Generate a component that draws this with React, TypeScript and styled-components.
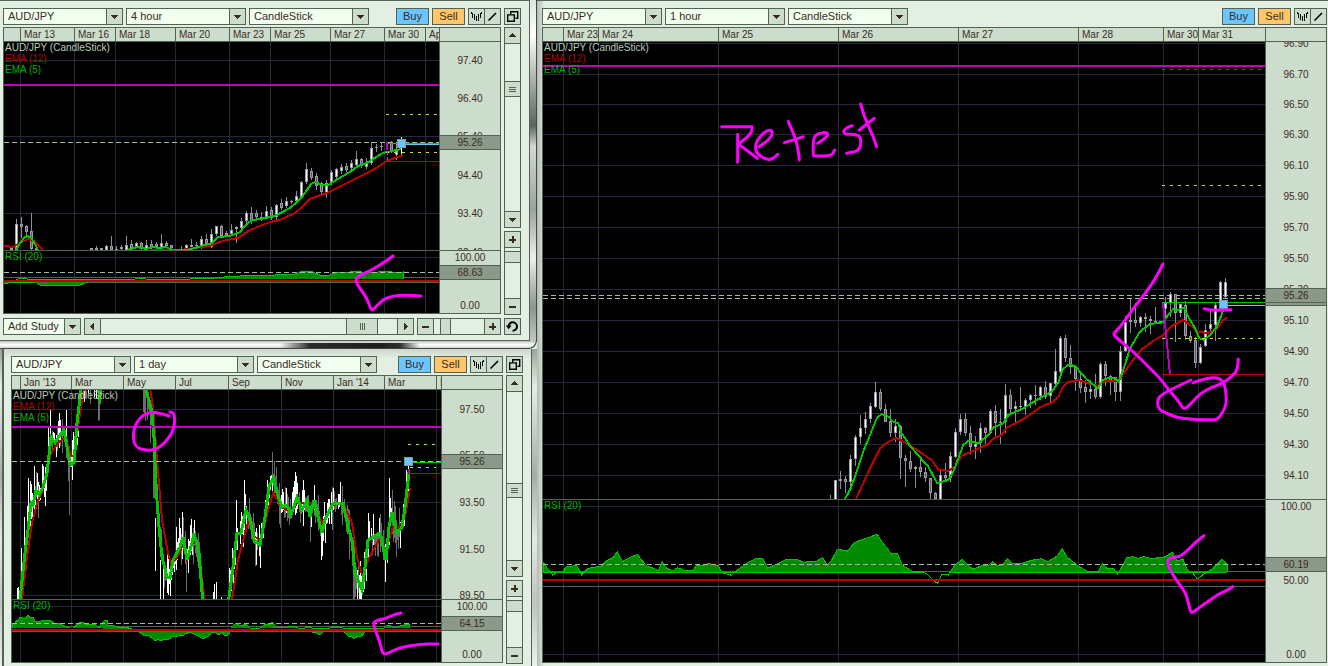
import React from 'react';
import styled, { createGlobalStyle } from 'styled-components';

/* ---------- theme ---------- */

const line = '#526352';
const face = '#cdddcd';
const panel = '#e4efe4';
const ink = '#3a2c1c';
const gridLine = '#222a3c';
const green = '#00c800';
const red = '#c00000';
const purple = '#c000c0';
const marker = '#ff00ff';
const pale = '#a9b9a9';
const yellow = '#dede21';
const blue = '#6bc6ff';

const GlobalStyle = createGlobalStyle`
  *, *::before, *::after { box-sizing: border-box; }
  body {
    margin: 0;
    background: ${panel};
    color: ${ink};
    font-family: "Liberation Sans", Arial, sans-serif;
    font-size: 11px;
    line-height: 15px;
  }
  button, select { font: inherit; color: inherit; }
`;

/* ---------- windows ---------- */

const Desktop = styled.main`
  display: grid;
  grid-template-columns: minmax(0, 537fr) minmax(0, 791fr);
  min-height: 100vh;
`;

const LeftColumn = styled.div`
  display: flex;
  flex-direction: column;
  min-width: 0;
`;

const TopFrame = styled.section`
  padding: 0 7px 8px 0;
  border-radius: 0 0 8px 0;
  background:
    linear-gradient(90deg, transparent 20px, #2a2a2a 50px, #1c1e1c 120px, #2c2f2c 140px, transparent 160px) 260px 100% / 170px 6px no-repeat,
    linear-gradient(180deg, #cfd4cf, #ffffff 40%, #c4c8c4) 0 100% / 100% 7px no-repeat,
    linear-gradient(180deg, #dfe3df 0%, #ffffff 10%, #8d918d 28%, #5f635f 36%, #d5d8d5 42%, #9da19d 60%, #eeeeee 74%, #8f938f 88%, #cfd2cf 100%);
  box-shadow: inset -1px -1px 0 #414a41;
`;

const BottomFrame = styled.section`
  display: flex;
  flex: 1;
  padding: 0 5px 0 2px;
  background: linear-gradient(180deg, #9aa29a, #e8ece8 12%, #a8aca8 40%, #e5e8e5 60%, #bfc3bf 80%, #eef0ee);
`;

const TopPanel = styled.div`
  padding: 7px 8px 5px 3px;
  border: solid ${line};
  border-width: 1px 1px 1px 0;
  background: ${panel};
`;

const BottomPanel = styled.div`
  flex: 1;
  min-width: 0;
  padding: 7px 8px 2px 7px;
  border: solid ${line};
  border-width: 0 1px 0 2px;
  background: linear-gradient(180deg, #cdd5cd, ${panel} 10px);
`;

const MainPanel = styled.section`
  display: flex;
  flex-direction: column;
  min-width: 0;
  padding: 7px 1px 3px 5px;
  border-top: 1px solid ${line};
  background: linear-gradient(90deg, #b3bab3, ${panel} 8px);
`;

/* ---------- toolbar ---------- */

const Toolbar = styled.div`
  display: flex;
  gap: 3px;
  height: 17px;
  margin-bottom: 2px;
`;

const ToolRow = styled.div`
  display: flex;
  gap: 3px;
  height: 17px;
  margin-top: 3px;
`;

const Spacer = styled.div`
  flex: 1;
`;

const Picker = styled.label<{ $width: number }>`
  display: grid;
  grid-template-columns: minmax(0, 1fr) 16px;
  width: ${(p) => p.$width}px;
  border: 1px solid ${line};
  background: #f0fff0;
`;

const PickerField = styled.select`
  grid-area: 1 / 1 / 2 / 3;
  appearance: none;
  min-width: 0;
  padding: 0 16px 0 4px;
  border: 0;
  border-radius: 0;
  background: transparent;
  line-height: 15px;
`;

const PickerArrow = styled.span`
  grid-area: 1 / 2;
  display: grid;
  place-items: center;
  border-left: 1px solid ${line};
  background: ${face};
  pointer-events: none;
`;

const TradeButton = styled.button<{ $color: string }>`
  width: 33px;
  padding: 0;
  border: 1px solid ${line};
  background: ${(p) => p.$color};
  line-height: 15px;
`;

const IconPair = styled.div`
  display: flex;
  width: 33px;
`;

const IconButton = styled.button<{ $joined?: boolean }>`
  display: grid;
  place-items: center;
  width: 17px;
  height: 17px;
  flex: none;
  padding: 0;
  border: 1px solid ${line};
  margin-left: ${(p) => (p.$joined ? '-1px' : '0')};
  background: ${face};
`;

/* ---------- scroll bars ---------- */

const Bar = styled.div<{ $vertical?: boolean; $size?: number }>`
  display: flex;
  flex-direction: ${(p) => (p.$vertical ? 'column' : 'row')};
  flex: ${(p) => (p.$size ? `0 0 ${p.$size}px` : '1')};
  min-width: 0;
`;

const Track = styled.div<{ $vertical?: boolean; $before: number; $after: number }>`
  display: grid;
  flex: 1;
  ${(p) =>
    p.$vertical
      ? `grid-template-rows: ${p.$before}fr auto ${p.$after}fr; border: solid ${line}; border-width: 0 1px;`
      : `grid-template-columns: ${p.$before}fr auto ${p.$after}fr; border: solid ${line}; border-width: 1px 0;`}
  background: ${panel};
`;

const Thumb = styled.div<{ $vertical?: boolean; $length: number }>`
  display: grid;
  place-items: center;
  ${(p) =>
    p.$vertical
      ? `grid-row: 2; height: ${p.$length}px; border: solid ${line}; border-width: 1px 0;`
      : `grid-column: 2; width: ${p.$length}px; border: solid ${line}; border-width: 0 1px;`}
  background: ${face};
`;

const Body = styled.div`
  display: flex;
  gap: 3px;
  align-items: flex-start;
`;

const SideBars = styled.div<{ $height: number }>`
  display: flex;
  flex-direction: column;
  gap: 3px;
  width: 17px;
  height: ${(p) => p.$height}px;
`;

/* ---------- chart frame ---------- */

const ChartBox = styled.div`
  display: flex;
  flex-direction: column;
  flex: 1;
  min-width: 0;
  border: 1px solid ${line};
  background: #000;
`;

const ChartHeader = styled.div`
  display: grid;
  grid-template-columns: minmax(0, 1fr) 61px;
  height: 14px;
  border-bottom: 1px solid ${line};
  background: ${face};
`;

const DateStrip = styled.div`
  display: flex;
  min-width: 0;
  overflow: hidden;
`;

const DateCell = styled.span<{ $width?: number }>`
  flex: ${(p) => (p.$width ? `0 0 ${p.$width}px` : '1 0 0')};
  min-width: 0;
  padding-left: 3px;
  overflow: hidden;
  border-right: ${(p) => (p.$width ? `1px solid ${line}` : '0')};
  font-size: 10px;
  line-height: 13px;
  white-space: nowrap;
`;

const Corner = styled.span`
  border-left: 1px solid ${line};
`;

const PaneRow = styled.div<{ $grow?: boolean; $ruled?: boolean }>`
  display: grid;
  grid-template-columns: minmax(0, 1fr) 61px;
  flex: ${(p) => (p.$grow ? '1 0 auto' : 'none')};
  border-bottom: ${(p) => (p.$ruled ? `1px solid ${line}` : '0')};
`;

const Plot = styled.div`
  position: relative;
  overflow: hidden;
`;

const Canvas = styled.svg`
  display: block;
  width: 100%;
`;

const Axis = styled.div`
  border-left: 1px solid ${line};
  background: ${face};
`;

const AxisText = styled.text`
  fill: ${ink};
  font-size: 10px;
  text-anchor: middle;
`;

const Legend = styled.div`
  position: absolute;
  top: 0;
  left: 1px;
  font-size: 10px;
  line-height: 11px;
  white-space: nowrap;
`;

const LegendItem = styled.div<{ $color: string }>`
  color: ${(p) => p.$color};
`;

/* ---------- icons ---------- */

const Arrow = ({ dir }: { dir: 'up' | 'down' | 'left' | 'right' }) => {
  const shapes = { down: 'M1 3h7v1H7v1H6v1H5v1H4V6H3V5H2V4H1z', up: 'M1 6h7V5H7V4H6V3H5V2H4v1H3v1H2v1H1z', left: 'M6 1v7H5V7H4V6H3V5H2V4h1V3h1V2h1V1z', right: 'M3 1v7h1V7h1V6h1V5h1V4H6V3H5V2H4V1z' };
  return (
    <svg width="9" height="9" viewBox="0 0 9 9" shapeRendering="crispEdges" aria-hidden="true">
      <path d={shapes[dir]} fill={ink} />
    </svg>
  );
};

const Sign = ({ plus }: { plus?: boolean }) => (
  <svg width="7" height="7" viewBox="0 0 7 7" shapeRendering="crispEdges" aria-hidden="true">
    <path d={plus ? 'M0 3h3V0h2v3h2v2H5v2H3V5H0z' : 'M0 3h7v2H0z'} fill={ink} />
  </svg>
);

const Grip = ({ vertical }: { vertical?: boolean }) => (
  <svg width="7" height="7" viewBox="0 0 7 7" shapeRendering="crispEdges" aria-hidden="true">
    <path d={vertical ? 'M0 1.5h7M0 3.5h7M0 5.5h7' : 'M1.5 0v7M3.5 0v7M5.5 0v7'} stroke={line} />
  </svg>
);

const BarsIcon = () => (
  <svg width="15" height="15" viewBox="0 0 15 15" shapeRendering="crispEdges" aria-hidden="true">
    <path d="M3.5 4v5M5.5 5v6M7.5 7v5M9.5 5v7M11.5 4v5M2.5 3v2M12.5 3v2" stroke="#000" />
  </svg>
);

const LineIcon = () => (
  <svg width="15" height="15" viewBox="0 0 15 15" aria-hidden="true">
    <path d="M3.5 11.5L11 4" stroke="#000" strokeWidth="1.6" />
  </svg>
);

const RestoreIcon = () => (
  <svg width="15" height="15" viewBox="0 0 15 15" aria-hidden="true">
    <path d="M5.7 5.5V2.7h7v6.6H10.5" fill="none" stroke="#000" strokeWidth="1.4" />
    <path d="M2.7 5.9h6.6v6.4H2.7z" fill="none" stroke="#000" strokeWidth="1.4" />
  </svg>
);

const ReloadIcon = () => (
  <svg width="15" height="15" viewBox="0 0 15 15" aria-hidden="true">
    <path d="M3.6 7.5A4.2 4.2 0 1 1 7.6 11.7" fill="none" stroke="#000" strokeWidth="2" />
    <path d="M0.8 6.5h5.8L3.7 10.2z" fill="#000" />
  </svg>
);

/* ---------- chart drawing ---------- */

type Origin = { x: number; y: number; per: number };
type Points = string;

const px = (x: number, y: number): Origin => ({ x, y, per: 1 });
/* Series sampled at three steps to the pixel, measured from a given corner. */
const fine = (x: number, y: number): Origin => ({ x, y, per: 3 });

const parse = (points: Points, o: Origin) =>
  points
    .trim()
    .split(/\s+/)
    .map((pair) => pair.split(',').map(Number))
    .map(([x, y]) => [o.x + x / o.per, o.y + y / o.per] as const);

const trace = (points: Points, o: Origin) =>
  parse(points, o)
    .map(([x, y]) => `${x.toFixed(1)},${y.toFixed(1)}`)
    .join(' ');

const curve = (points: Points, o: Origin) => {
  const p = parse(points, o);
  let d = `M${p[0][0]} ${p[0][1]}`;
  for (let i = 1; i < p.length - 1; i++) {
    const mx = (p[i][0] + p[i + 1][0]) / 2;
    const my = (p[i][1] + p[i + 1][1]) / 2;
    d += `Q${p[i][0].toFixed(1)} ${p[i][1].toFixed(1)} ${mx.toFixed(1)} ${my.toFixed(1)}`;
  }
  const last = p[p.length - 1];
  return `${d}L${last[0]} ${last[1]}`;
};

const Series = ({ points, at = px(0, 0), color, width = 2 }: { points: Points; at?: Origin; color: string; width?: number }) => (
  <polyline points={trace(points, at)} fill="none" stroke={color} strokeWidth={width} />
);

const Stroke = ({ points, at = px(0, 0) }: { points: Points; at?: Origin }) => (
  <path d={curve(points, at)} fill="none" stroke={marker} strokeWidth="3" strokeLinecap="round" strokeLinejoin="round" shapeRendering="auto" />
);

const Level = ({ y, color, from = 0, to = 4000, dash, width = 1 }: { y: number; color: string; from?: number; to?: number; dash?: string; width?: number }) => (
  <line x1={from} x2={to} y1={y + width / 2} y2={y + width / 2} stroke={color} strokeWidth={width} strokeDasharray={dash} />
);

const Grid = ({ xs, ys }: { xs: number[]; ys: number[] }) => (
  <g>
    {xs.map((x) => <rect key={x} x={x} y="0" width="1" height="2000" fill={gridLine} />)}
    {ys.map((y) => <rect key={y} x="0" y={y} width="4000" height="1" fill={gridLine} />)}
  </g>
);

/* Each candle: x, high, body top, body bottom, low, and u (up) or d (down). */
const Candles = ({ data, at }: { data: string; at: Origin }) => (
  <g>
    {data.trim().split(/\s*;\s*/).filter(Boolean).map((row) => {
      const [x, h, t, b, l, dir] = row.split(' ');
      const cx = Math.round(at.x + Number(x) / at.per - (at.per === 3 ? 0.34 : 0));
      const [hi, top, bot, low] = [h, t, b, l].map((v) => Math.round(at.y + Number(v) / at.per));
      const height = Math.max(1, bot - top);
      return (
        <g key={x}>
          <rect x={cx} y={hi} width="1" height={Math.max(1, low - hi)} fill="#8c8c94" />
          <rect x={cx - 1} y={top} width="3" height={height} fill="#9c9ca6" />
          {height > 2 && <rect x={cx} y={top + 1} width="1" height={height - 2} fill={dir === 'u' ? '#ffffff' : '#5c5c62'} />}
        </g>
      );
    })}
  </g>
);

const Position = ({ x, y }: { x: number; y: number }) => (
  <rect x={x + 0.5} y={y + 0.5} width="8" height="8" fill={blue} stroke="#7c98a8" />
);

/* Daily bars are one pixel apart and hug the fast average. */
const DailyBars = ({ runs }: { runs: Points[] }) => {
  const bars: React.ReactElement[] = [];
  runs.forEach((run, r) => {
    const p = parse(run, px(0, 0));
    const at = (x: number) => {
      const i = Math.min(p.length - 2, Math.max(0, p.findIndex((q) => q[0] > x) - 1));
      const [a, b] = [p[i], p[i + 1]];
      return a[1] + ((b[1] - a[1]) * (x - a[0])) / (b[0] - a[0] || 1);
    };
    for (let x = p[0][0]; x < p[p.length - 1][0]; x++) {
      const n = Math.abs(Math.sin(x * 12.9898 + r) * 43758.5453) % 1;
      const m = Math.abs(Math.sin(x * 78.233 + r) * 24634.6345) % 1;
      const slope = at(x + 3) - at(x - 1);
      const wave = Math.sin(x * 0.9 + Math.sin(x * 0.31) * 2);
      if (n < 0.15) continue;
      const up = slope < -6 || (slope < 6 && wave > 0);
      const y = at(x) - wave * 5;
      const above = 3 + n * n * n * 20 + (slope < -4 ? 5 : 0);
      const below = 3 + m * m * m * 20 + (slope > 4 ? 6 : 0);
      bars.push(<rect key={`${r}-${x}`} x={x} y={Math.round(y - above)} width="1" height={Math.round(above + below)} fill={up ? '#ffffff' : '#6c6c6c'} />);
    }
  });
  return <g>{bars}</g>;
};

const Spikes = ({ data, color }: { data: number[][]; color: string }) => (
  <g>{data.map(([x, a, b]) => <rect key={x} x={x} y={a} width="1" height={b - a} fill={color} />)}</g>
);

/* ---------- composed parts ---------- */

type Tick = [string, number];
type Tag = { text: string; y: number; top: number; bottom: number; rule?: number };

type PaneProps = {
  left: number;
  top: number;
  height: number;
  ticks: Tick[];
  tag: Tag;
  legend: [string, string][];
  ruled?: boolean;
  grow?: boolean;
  label: string;
  children: React.ReactNode;
};

const Pane = ({ left, top, height, ticks, tag, legend, ruled, grow, label, children }: PaneProps) => (
  <PaneRow $ruled={ruled} $grow={grow}>
    <Plot>
      <Canvas height={height} shapeRendering="crispEdges" role="img" aria-label={label}>
        <g transform={`translate(${-left} ${-top})`}>{children}</g>
      </Canvas>
      <Legend>
        {legend.map(([text, color]) => <LegendItem key={text} $color={color}>{text}</LegendItem>)}
      </Legend>
    </Plot>
    <Axis>
      <Canvas height={height}>
        <g transform={`translate(0 ${-top})`}>
          {ticks.map(([text, y]) => <AxisText key={text} x="50%" y={y + 4}>{text}</AxisText>)}
          <rect x="0" width="100%" y={tag.top} height={tag.bottom - tag.top + 1} fill="#8a998a" />
          {[tag.top, tag.bottom, tag.rule ?? tag.bottom].map((y, i) => <rect key={i} x="0" width="100%" y={y} height="1" fill={line} />)}
          <AxisText x="50%" y={tag.y + 4}>{tag.text}</AxisText>
        </g>
      </Canvas>
    </Axis>
  </PaneRow>
);

const Dates = ({ cells }: { cells: [string, number?][] }) => (
  <ChartHeader>
    <DateStrip>
      {cells.map(([text, width], i) => <DateCell key={i} $width={width}>{text}</DateCell>)}
    </DateStrip>
    <Corner />
  </ChartHeader>
);

const Dropdown = ({ label, options, width = 120 }: { label: string; options: string[]; width?: number }) => (
  <Picker $width={width}>
    <PickerField aria-label={label}>
      {options.map((o) => <option key={o}>{o}</option>)}
    </PickerField>
    <PickerArrow><Arrow dir="down" /></PickerArrow>
  </Picker>
);

const ChartToolbar = ({ interval, restore }: { interval: string; restore?: boolean }) => (
  <Toolbar>
    <Dropdown label="Currency pair" options={['AUD/JPY']} />
    <Dropdown label="Interval" options={[interval]} />
    <Dropdown label="Chart type" options={['CandleStick']} />
    <Spacer />
    <TradeButton $color={blue}>Buy</TradeButton>
    <TradeButton $color="#ffc66b">Sell</TradeButton>
    <IconPair>
      <IconButton aria-label="Studies"><BarsIcon /></IconButton>
      <IconButton $joined aria-label="Draw line"><LineIcon /></IconButton>
    </IconPair>
    {restore && <IconButton aria-label="Pop out"><RestoreIcon /></IconButton>}
  </Toolbar>
);

const VerticalBars = ({ height, before, thumb, after }: { height: number; before: number; thumb: number; after: number }) => (
  <SideBars $height={height}>
    <Bar $vertical>
      <IconButton aria-label="Scroll up"><Arrow dir="up" /></IconButton>
      <Track $vertical $before={before} $after={after}><Thumb $vertical $length={thumb}><Grip vertical /></Thumb></Track>
      <IconButton aria-label="Scroll down"><Arrow dir="down" /></IconButton>
    </Bar>
    <Bar $vertical $size={84}>
      <IconButton aria-label="Zoom in price"><Sign plus /></IconButton>
      <Track $vertical $before={3} $after={35}><Thumb $vertical $length={12} /></Track>
      <IconButton aria-label="Zoom out price"><Sign /></IconButton>
    </Bar>
  </SideBars>
);

const priceLegend: [string, string][] = [
  ['AUD/JPY (CandleStick)', '#b9c9b9'],
  ['EMA (12)', '#b40000'],
  ['EMA (5)', '#00b400'],
];
const rsiLegend: [string, string][] = [['RSI (20)', '#00b400']];

const RsiArea = ({ points, at = px(0, 0) }: { points: Points; at?: Origin }) => (
  <g>
    <polygon points={trace(points, at)} fill="#008a00" />
    <polyline points={trace(points, at)} fill="none" stroke={green} />
  </g>
);

/* ---------- 4 hour ---------- */

const fourHourX = [20, 74, 115, 175, 229, 270, 330, 384, 425];

const fourHourCandles = `
11 247 248 250 250 u;16 219 224 250 250 u;21 217 224 227 238 d;26 225 226 232 236 d;31 213 231 249 250 d;36 248 248 250 250 d;
91 248 248 250 250 u;96 246 248 250 250 d;101 248 248 250 250 d;106 245 246 250 250 u;111 236 246 250 250 d;116 246 249 250 250 d;
121 245 247 249 250 d;126 236 245 250 250 u;131 240 244 248 250 d;136 242 243 247 248 u;141 242 243 248 250 d;146 240 245 249 250 u;
151 240 244 247 250 d;156 242 244 247 248 d;161 234 243 247 248 u;166 241 243 246 248 d;171 245 245 248 249 d;181 246 249 250 250 u;
186 244 245 249 250 u;191 239 245 247 250 d;196 242 245 246 248 d;201 236 239 247 249 u;206 234 239 244 247 d;211 229 234 247 248 u;
216 226 226 234 236 u;221 225 226 236 238 d;226 231 233 235 236 d;231 224 230 234 236 u;236 226 227 229 243 d;241 218 221 228 230 u;
246 211 213 221 223 u;251 207 213 220 224 d;256 210 213 217 221 d;261 212 217 219 221 u;266 206 211 217 219 u;271 207 210 218 220 d;
276 204 205 217 220 u;281 199 203 208 210 d;286 197 201 206 208 u;291 200 201 202 204 d;296 191 196 201 203 u;301 181 182 197 199 u;
306 163 169 182 184 u;311 168 171 178 180 d;316 173 176 186 190 d;321 182 183 192 195 d;326 180 183 193 198 u;331 170 172 182 185 u;
336 168 169 177 180 u;341 164 167 171 174 u;346 163 166 170 172 d;351 160 163 168 172 u;356 151 159 165 167 u;361 158 159 166 168 d;
366 158 163 167 169 u;371 142 148 163 165 u;376 144 147 148 152 d;381 142 146 147 151 d;391 141 142 152 153 d;396 143 151 155 160 u`;

const FourHour = () => (
  <ChartBox>
    <Dates cells={[['', 17], ['Mar 13', 54], ['Mar 16', 41], ['Mar 18', 60], ['Mar 20', 54], ['Mar 23', 41], ['Mar 25', 60], ['Mar 27', 54], ['Mar 30', 41], ['Apr 1']]} />
    <Pane label="4 hour price chart" left={4} top={42} height={208} ruled legend={priceLegend}
      ticks={[['97.40', 60], ['96.40', 98], ['95.40', 136], ['94.40', 175], ['93.40', 213], ['92.40', 252]]}
      tag={{ text: '95.26', y: 142, top: 135, bottom: 149 }}>
      <Grid xs={fourHourX} ys={[60, 136, 213]} />
      <Level y={84} color={purple} width={2} />
      <Level y={142} color={pale} dash="5 3" from={4} />
      <Candles data={fourHourCandles} at={px(0, 0)} />
      <Series color={red} points="4,246 13,247 20,243 28,239 34,241 40,247 43,250" />
      <Series color={green} points="16,250 20,243 25,237 28,236 32,239 36,246 38,250" />
      <Series color={red} points="150,250 180,250 195,248 210,246 222,241 238,238 250,230 270,222 280,220 295,213 302,207 310,199 318,196 327,193 333,190 353,180 373,170 387,161 395,158 403,155" />
      <Series color={green} points="128,250 137,247 147,249 152,247 160,248 166,247 172,250 187,250 195,248 205,245 212,243 218,237 230,236 240,232 247,224 252,220 260,219 270,217 277,215 290,208 297,202 302,197 307,190 311,184 315,182 322,185 328,185 338,179 353,170 358,166 367,163 376,157 383,153 392,151 401,149" />
      <Level y={114} color={yellow} from={386} to={437} dash="3 5" />
      <Level y={152} color={yellow} from={386} to={437} dash="3 5" />
      <Level y={161} color={red} from={386} />
      <Level y={143} color={green} from={386} />
      <Level y={144} color={blue} from={406} />
      <rect x="386" y="142" width="2" height="8" fill={purple} />
      <line x1="387.5" x2="387.5" y1="152" y2="161" stroke={marker} strokeDasharray="3 2" />
      <rect x="401" y="137" width="1" height="17" fill="#fff" />
      <Position x={397} y={139} />
    </Pane>
    <Pane label="4 hour RSI chart" left={4} top={251} height={62} legend={rsiLegend}
      ticks={[['100.00', 257], ['0.00', 305]]}
      tag={{ text: '68.63', y: 272, top: 265, bottom: 279 }}>
      <Grid xs={fourHourX} ys={[257]} />
      <Level y={277} color={line} />
      <RsiArea points="212,279 216,277 224,277 240,276 247,275 252,276 275,275 280,274 295,274 303,271 310,271 320,275 330,275 337,272 350,272 358,271 365,273 378,272 388,271 395,273 403,272 403,279" />
      <Series color={green} width={1} points="16,280 20,278 27,279 60,280 92,279 135,279 140,278 146,279 190,279 204,278 212,279" />
      <Level y={280} color={red} width={2} />
      <Level y={282} color={line} />
      <RsiArea points="4,283 8,283 12,282 36,282 40,285 50,285 58,286 68,285 80,285 85,283 88,282" />
      <Level y={272} color={pale} dash="5 3" from={4} />
      <Stroke points="393,256 385,262 370,271 356,277 356,283 367,298 371,310 373,310 382,300 392,296 405,295 421,296" />
    </Pane>
  </ChartBox>
);

/* ---------- 1 day ---------- */

const dayX = [20, 71, 123, 175, 228, 281, 333, 384, 436];

const dayRuns = [
  '17,606 20,599 25,553 28,530 31,503 33,505 36,490 39,495 43,487 47,473 51,437 55,443 58,438 64,430 68,453 71,465 74,463 77,423 82,380',
  '146,390 152,412 154,437 156,487 159,527 162,557 167,577 170,578 173,560 180,547 183,537 187,560 192,543 194,533 199,553 203,605',
  '228,605 233,567 237,533 241,533 246,510 250,520 254,540 260,545 265,517 269,487 273,478 277,493 282,507 287,505 291,515 297,497 302,510 307,500 310,517 314,500 322,533 325,520 333,503 343,503 348,527 352,540 355,573 362,590 365,567 368,540 380,533 386,560 389,527 392,512 397,533 402,527 405,507 409,472',
];

const slowRuns = [
  '22,599 27,557 32,523 37,503 43,490 51,453 58,443 65,437 71,455 74,457 78,427 84,388',
  '150,388 153,407 157,460 162,520 168,553 171,564 177,558 183,545 187,560 194,540 199,553 205,602',
  '232,600 238,560 248,522 255,537 261,540 269,507 273,493 283,508 292,512 297,503 313,503 322,523 333,505 343,503 352,523 357,557 363,578 368,560 380,538 386,550 393,527 397,532 405,517 410,488',
];

const Daily = () => (
  <ChartBox>
    <Dates cells={[['', 9], ["Jan '13", 51], ['Mar', 52], ['May', 52], ['Jul', 53], ['Sep', 53], ['Nov', 52], ["Jan '14", 51], ['Mar', 52], ['May']]} />
    <Pane label="1 day price chart" left={12} top={390} height={209} ruled legend={priceLegend}
      ticks={[['97.50', 409], ['95.50', 455], ['93.50', 502], ['91.50', 549], ['89.50', 595]]}
      tag={{ text: '95.26', y: 461, top: 454, bottom: 468 }}>
      <Grid xs={dayX} ys={[409, 502, 595]} />
      <DailyBars runs={dayRuns} />
      <Spikes color="#ffffff" data={[[17, 588, 599], [21, 548, 580], [24, 517, 550], [28, 478, 530], [34, 466, 500], [42, 464, 490], [48, 426, 460], [50, 410, 440], [60, 420, 440], [66, 410, 445], [72, 450, 480], [84, 390, 402], [88, 390, 394], [94, 390, 397], [96, 390, 399], [155, 518, 571], [160, 560, 599], [163, 560, 599], [168, 565, 595], [176, 527, 555], [182, 512, 545], [190, 525, 550], [194, 520, 540], [213, 592, 599], [214, 584, 599], [216, 582, 599], [221, 597, 599], [236, 500, 545], [244, 480, 515], [256, 530, 565], [259, 525, 556], [296, 476, 510], [314, 485, 510], [321, 530, 560], [333, 488, 510], [357, 570, 599], [359, 575, 599], [360, 575, 599], [361, 580, 599], [368, 513, 560], [373, 514, 545], [379, 518, 540], [389, 478, 525], [385, 550, 582], [408, 464, 500]]} />
      <Spikes color="#6c6c6c" data={[[38, 486, 518], [69, 455, 515], [85, 390, 398], [90, 390, 404], [98, 390, 421], [99, 390, 420], [143, 390, 412], [144, 390, 415], [145, 390, 421], [147, 390, 420], [150, 400, 443], [153, 440, 498], [154, 430, 498], [186, 555, 592], [272, 452, 480], [285, 487, 510], [310, 505, 542], [349, 510, 559], [353, 560, 599], [354, 540, 599], [396, 520, 557], [255, 540, 566]]} />
      {slowRuns.map((r) => <Series key={r} color={red} points={r} />)}
      {dayRuns.map((r) => <Series key={r} color={green} width={3} points={r} />)}
      <Series color={green} points="98,388 100,404 101,388" />
      <Level y={426} color={purple} width={2} />
      <Level y={461} color={pale} dash="5 3" from={12} />
      <Level y={444} color={yellow} from={408} to={436} dash="3 5" />
      <Level y={467} color={yellow} from={410} to={436} dash="3 5" />
      <Level y={473} color={red} from={408} />
      <Level y={462} color={green} from={410} />
      <rect x="408" y="469" width="2" height="4" fill={purple} />
      <Position x={404} y={457} />
      <Stroke points="169,416 160,413 150,412 140,417 133,430 134,447 148,451 160,448 172,434 175,423 174,413 170,412" />
    </Pane>
    <Pane label="1 day RSI chart" left={12} top={600} height={62} legend={rsiLegend}
      ticks={[['100.00', 606], ['0.00', 654]]}
      tag={{ text: '64.15', y: 623, top: 616, bottom: 630 }}>
      <Grid xs={dayX} ys={[606]} />
      <Level y={626} color={line} />
      <RsiArea points="12,628 12,623 15,623 17,620 18,621 20,617 22,617 24,619 26,617 28,615 30,618 33,617 35,621 40,622 42,620 45,621 50,620 55,624 58,623 62,625 70,628" />
      <RsiArea points="73,628 79,623 82,622 85,624 92,625 95,624 99,628 101,624 105,620 107,620 108,625 115,626 122,628 125,627 132,629" />
      <RsiArea points="231,628 236,623 240,626 246,624 250,628 260,628 266,624 269,625 272,622 277,627 281,628 295,626 298,628 305,628 308,626 312,628 330,628 335,626 343,628 384,628 387,625 390,625 393,628 400,626 409,624 410,628" />
      <Level y={629} color={red} width={2} />
      <Level y={631} color={line} />
      <RsiArea points="139,632 142,634 145,636 148,635 152,638 155,641 158,639 160,641 165,639 168,640 173,636 176,637 180,635 183,636 185,634 190,632" />
      <RsiArea points="190,632 198,636 202,638 205,638 209,636 212,632 215,632 219,635 222,632 225,636 228,635 230,632" />
      <RsiArea points="312,632 316,633 320,635 323,632" />
      <RsiArea points="344,632 348,636 351,636 354,639 358,636 362,636 365,632" />
      <Level y={623} color={pale} dash="5 3" from={12} />
      <Stroke points="401,613 395,614 385,619 373,621 375,630 380,642 382,652 385,655 398,648 420,644 438,644" />
    </Pane>
  </ChartBox>
);

/* ---------- 1 hour ---------- */

const hourX = [563, 598, 718, 838, 958, 1078, 1163, 1198];

const hourTicks: Tick[] = [
  ['96.90', 43], ['96.70', 74], ['96.50', 104], ['96.30', 134], ['96.10', 165], ['95.90', 196], ['95.70', 227], ['95.50', 258],
  ['95.30', 289], ['95.10', 320], ['94.90', 351], ['94.70', 382], ['94.50', 413], ['94.30', 444], ['94.10', 475],
];

const hourEarly = `
31 525 537 540 540 d;46 480 481 540 540 u;61 452 478 482 507 d;76 468 478 487 518 d;91 405 418 487 505 u;106 345 352 418 437 u;121 285 325 352 372 u;
136 277 298 325 342 u;151 250 259 298 308 u;166 186 217 260 265 u;181 207 217 268 272 d;196 252 268 305 306 d;211 267 304 338 352 d;226 298 318 338 365 u;
241 315 318 415 477 d;256 405 415 422 500 d;271 392 422 448 455 d;286 437 442 448 503 u;301 418 442 457 470 d;316 442 457 475 486 d;331 475 475 520 537 d;
346 515 520 537 540 d;361 452 465 540 540 u;376 430 465 475 482 d;391 395 408 475 485 u;406 325 337 410 415 u;421 282 297 337 345 u;436 280 298 340 347 d;
451 318 340 380 402 d;466 347 372 380 416 u;481 309 325 370 398 u;496 321 323 338 375 d;511 267 273 340 343 u;526 255 273 308 350 d;541 267 306 309 372 d;
556 192 226 307 338 u;571 207 226 268 278 d;586 243 259 268 305 u;601 202 258 261 270 d;616 235 241 262 285 u;631 222 226 241 265 u;646 195 225 228 255 d;
661 198 202 228 240 u;676 183 202 230 237 d;691 190 190 228 245 u;706 87 153 192 200 u;721 48 55 155 160 u;736 45 55 115 125 d;751 76 115 140 162 d;
766 135 138 178 212 d;781 155 178 203 218 d;796 180 202 217 248 d;811 180 208 217 238 u;826 162 208 230 237 d;841 126 133 230 237 u;856 123 133 167 198 d;
871 165 167 185 225 d;886 170 172 217 243 d`;

const hourLate = `
121 318 334 457 482 u;136 227 247 333 335 u;151 178 241 247 280 u;166 190 241 250 260 d;181 227 230 250 262 u;196 220 230 238 275 d;211 228 237 244 282 d;
226 200 243 246 248 d;241 243 243 246 248 d;256 172 188 208 235 u;271 157 163 190 230 u;286 163 163 220 305 d;301 193 193 220 230 u;316 183 195 287 300 d;
331 272 287 302 308 d;346 290 300 370 385 d;361 312 320 370 372 u;376 252 270 318 322 u;391 213 252 268 273 u;406 185 195 255 302 u;421 122 126 190 200 u;
436 114 126 172 175 u`;

const rsiEarly = '9,247 9,215 22,235 38,255 50,248 70,246 78,230 110,227 118,240 125,255 145,235 185,228 200,212 220,203 232,185 247,215 265,205 292,193 305,210 320,228 340,235 355,242 367,215 380,235 398,242 412,233 430,240 460,240 470,225 490,228 505,220 535,227 545,248 575,256 595,238 625,217 650,205 668,206 683,235 715,220 740,208 770,208 790,217 830,213 848,203 862,226 875,210 892,178 922,183 945,157 1012,133 1025,155 1055,192 1072,190 1087,226 1115,243 1145,243 1165,255 1180,272 1193,280';
const rsiLate = '53,280 65,253 85,255 105,225 127,208 158,238 185,227 205,227 218,215 232,227 248,227 262,205 278,222 310,219 335,211 365,206 382,216 412,198 427,176 442,202 475,228 500,243 535,243 548,220 560,235 580,236 592,252 603,235 620,203 640,200 655,205 670,200 690,205 730,203 757,187 772,213 788,206 802,240 818,248 833,268 850,253 880,235 907,208 921,224 921,247';

const Hourly = () => (
  <ChartBox>
    <Dates cells={[['', 21], ['Mar 23', 35], ['Mar 24', 120], ['Mar 25', 120], ['Mar 26', 120], ['Mar 27', 120], ['Mar 28', 85], ['Mar 30', 35], ['Mar 31']]} />
    <Pane label="1 hour price chart" left={543} top={42} height={457} ruled grow legend={priceLegend} ticks={hourTicks}
      tag={{ text: '95.26', y: 295, top: 288, bottom: 305, rule: 302 }}>
      <Grid xs={hourX} ys={hourTicks.map(([, y]) => y)} />
      <Level y={65} color={purple} width={2} />
      <Level y={295} color={pale} dash="5 3" from={543} />
      <Level y={298} color={pale} dash="5 3" from={543} />
      <Candles data={hourEarly} at={fine(820, 320)} />
      <Candles data={hourLate} at={fine(1080, 240)} />
      <Series color={red} at={fine(820, 320)} points="108,537 130,490 150,445 180,385 205,365 230,354 265,373 300,396 335,420 355,448 385,453 405,440 425,407 450,397 500,375 520,355 545,345 560,323 620,292 660,262 700,245 715,230 728,203 745,186 775,180 800,188 833,197 855,183 895,184" />
      <Series color={red} at={fine(1080, 240)} points="115,423 130,402 155,365 185,328 220,303 245,288 275,258 310,240 335,258 355,277 385,278 410,268 430,240 443,231" />
      <Series color={green} at={fine(820, 320)} points="75,537 92,505 110,455 130,395 150,345 170,295 185,282 205,290 218,304 235,310 245,340 270,378 300,412 325,440 352,490 385,480 400,455 415,415 430,375 445,362 475,370 505,345 520,322 550,310 565,285 610,265 650,240 695,215 715,188 728,148 745,134 765,138 800,178 833,205 848,180 870,172 885,175 898,187" />
      <Series color={green} at={fine(1080, 240)} points="115,427 130,390 150,325 180,275 210,252 250,247 262,228 280,207 295,210 312,203 325,230 345,265 358,295 370,299 390,285 410,262 428,215 437,195" />
      <Level y={69} color="#109010" from={1162} to={1262} dash="3 5" />
      <Level y={185} color="#c0c896" from={1162} to={1262} dash="3 5" />
      <Level y={338} color={yellow} from={1162} to={1262} dash="3 5" />
      <Level y={302} color={green} from={1162} />
      <Level y={305} color={blue} from={1227} />
      <Level y={374} color={red} from={1162} />
      <line x1="1163" y1="303" x2="1170" y2="374" stroke={purple} strokeWidth="2" />
      <Position x={1219} y={300} />
      <Stroke at={fine(540, 0)} points="545,380 636,380 637,380 634,402 595,432 596,433 652,475" />
      <Stroke at={fine(540, 0)} points="593,403 593,440 593,487" />
      <Stroke at={fine(540, 0)} points="657,440 690,420 700,392 680,390 650,420 645,455 670,475 695,480 713,463" />
      <Stroke at={fine(540, 0)} points="745,365 765,410 775,450 778,480" />
      <Stroke at={fine(540, 0)} points="733,428 760,420 790,410" />
      <Stroke at={fine(540, 0)} points="833,430 862,412 864,396 835,400 820,412 819,467 822,468 875,468 884,450" />
      <Stroke at={fine(540, 0)} points="937,377 913,385 910,403 950,403 964,415 960,452 920,460" />
      <Stroke at={fine(540, 0)} points="962,312 972,350 1000,410 1010,440" />
      <Stroke at={fine(540, 0)} points="958,390 980,372 1003,355" />
      <Stroke at={fine(1080, 240)} points="249,72 230,110 200,155 160,205 120,262 100,280 105,290 160,335 210,385 240,415 265,448 300,490 310,508 325,500 360,460 400,440 430,430 460,405 472,390 475,358" />
      <Stroke at={fine(1080, 240)} points="340,428 380,413 420,413 435,435 440,480 435,505 417,535 400,541 300,536 260,520 235,508 232,480 245,462 333,420" />
      <Stroke at={fine(1080, 240)} points="373,206 400,212 453,209" />
    </Pane>
    <Pane label="1 hour RSI chart" left={543} top={500} height={162} legend={rsiLegend}
      ticks={[['100.00', 506], ['50.00', 580], ['0.00', 654]]}
      tag={{ text: '60.19', y: 564, top: 557, bottom: 571 }}>
      <clipPath id="above-baseline"><rect x="0" y="500" width="4000" height="73" /></clipPath>
      <Grid xs={hourX} ys={[506, 654]} />
      <Level y={571} color="#5c5c5c" />
      <g clipPath="url(#above-baseline)">
        <polygon points={`${trace(rsiEarly, fine(540, 490))} ${trace(rsiLate, fine(920, 490))} 543,573`} fill="#008a00" />
      </g>
      <Series color={green} width={1} at={fine(540, 490)} points={rsiEarly} />
      <Series color={green} width={1} at={fine(920, 490)} points={rsiLate} />
      <Level y={572} color={green} from={543} to={925} />
      <Level y={572} color={green} from={950} to={1227} />
      <Level y={579} color={red} width={2} />
      <Level y={586} color={line} />
      <Level y={564} color={pale} dash="5 3" from={543} />
      <Stroke at={fine(920, 490)} points="852,137 830,152 790,195 765,202 742,206 745,230 765,265 795,305 803,330 812,368 818,368 895,312 920,302 938,290" />
    </Pane>
  </ChartBox>
);

/* ---------- page ---------- */

export default function App() {
  return (
    <>
      <GlobalStyle />
      <Desktop>
        <LeftColumn>
          <TopFrame aria-label="AUD/JPY 4 hour">
            <TopPanel>
              <ChartToolbar interval="4 hour" restore />
              <Body>
                <FourHour />
                <VerticalBars height={288} before={37} thumb={16} after={114} />
              </Body>
              <ToolRow>
                <Dropdown label="Add study" options={['Add Study']} width={78} />
                <Bar>
                  <IconButton aria-label="Scroll left"><Arrow dir="left" /></IconButton>
                  <Track $before={245} $after={19}><Thumb $length={32}><Grip /></Thumb></Track>
                  <IconButton aria-label="Scroll right"><Arrow dir="right" /></IconButton>
                </Bar>
                <Bar $size={84}>
                  <IconButton aria-label="Zoom out time"><Sign /></IconButton>
                  <Track $before={6} $after={33}><Thumb $length={11} /></Track>
                  <IconButton aria-label="Zoom in time"><Sign plus /></IconButton>
                </Bar>
                <IconButton aria-label="Reset view"><ReloadIcon /></IconButton>
              </ToolRow>
            </TopPanel>
          </TopFrame>
          <BottomFrame aria-label="AUD/JPY 1 day">
            <BottomPanel>
              <ChartToolbar interval="1 day" restore />
              <Body>
                <Daily />
                <VerticalBars height={289} before={91} thumb={15} after={62} />
              </Body>
            </BottomPanel>
          </BottomFrame>
        </LeftColumn>
        <MainPanel aria-label="AUD/JPY 1 hour">
          <ChartToolbar interval="1 hour" />
          <Hourly />
        </MainPanel>
      </Desktop>
    </>
  );
}
